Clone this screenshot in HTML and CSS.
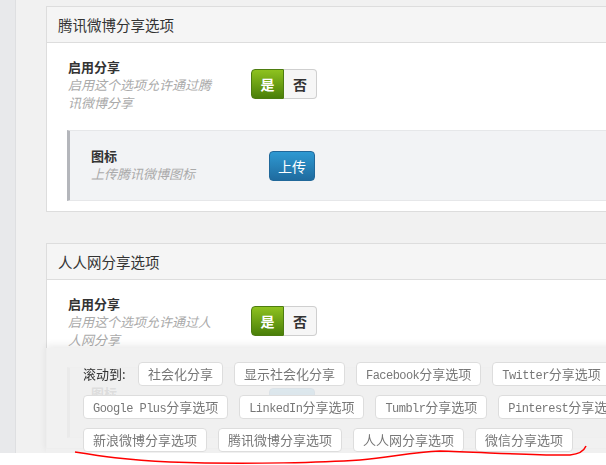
FILE: index.html
```html
<!DOCTYPE html>
<html>
<head>
  <title>分享选项</title>
  <meta charset="UTF-8" />
  <meta name="viewport" content="width=device-width, initial-scale=1.0"/>
  <link rel="stylesheet" href="styles.css">
</head>
<body>
  <div class="page">
    <div class="sidebar"></div>
    <div class="main">

      <div class="panel">
        <div class="panel-head">腾讯微博分享选项</div>
        <div class="row">
          <div class="label-col">
            <div class="label">启用分享</div>
            <div class="desc">启用这个选项允许通过腾讯微博分享</div>
          </div>
          <div class="toggle">
            <span class="on">是</span>
            <span class="off">否</span>
          </div>
        </div>
        <div class="sub">
          <div class="label-col">
            <div class="label">图标</div>
            <div class="desc">上传腾讯微博图标</div>
          </div>
          <button class="upload">上传</button>
        </div>
      </div>

      <div class="panel">
        <div class="panel-head">人人网分享选项</div>
        <div class="row">
          <div class="label-col">
            <div class="label">启用分享</div>
            <div class="desc">启用这个选项允许通过人人网分享</div>
          </div>
          <div class="toggle">
            <span class="on">是</span>
            <span class="off">否</span>
          </div>
        </div>
        <div class="sub">
          <div class="label-col">
            <div class="label">图标</div>
            <div class="desc">上传人人网图标</div>
          </div>
          <button class="upload">上传</button>
        </div>
      </div>

    </div>
  </div>

  <div class="scrollbar">
    <div class="scroll-links">
      <span class="scroll-label">滚动到:</span>
      <a class="jump">社会化分享</a>
      <a class="jump">显示社会化分享</a>
      <a class="jump"><span class="en">Facebook</span>分享选项</a>
      <a class="jump"><span class="en">Twitter</span>分享选项</a>
      <a class="jump"><span class="en">Google Plus</span>分享选项</a>
      <a class="jump"><span class="en">LinkedIn</span>分享选项</a>
      <a class="jump"><span class="en">Tumblr</span>分享选项</a>
      <a class="jump"><span class="en">Pinterest</span>分享选项</a>
      <a class="jump">新浪微博分享选项</a>
      <a class="jump">腾讯微博分享选项</a>
      <a class="jump">人人网分享选项</a>
      <a class="jump">微信分享选项</a>
    </div>
  </div>

  <div class="bottom-edge"></div>

  <svg class="mark" width="606" height="465" viewBox="0 0 606 465">
    <path d="M75 452 C100 456, 125 460, 170 462 C250 465, 330 462, 360 460 C390 458, 410 452, 440 451 C480 452, 540 456, 570 455 C580 454, 584 451, 586 446" fill="none" stroke="#f00" stroke-width="1.5"/>
  </svg>
</body>
</html>
```

FILE: styles.css
```css
html, body { margin: 0; overflow: hidden; }
body { font-family: "Noto Sans CJK SC", "Liberation Sans", sans-serif; background: #f1f1f1; color: #333; height: 465px; }

.page { display: flex; width: 760px; min-height: 465px; }
.sidebar { width: 15px; background: #e8e9eb; border-right: 1px solid #dedfe1; }
.main { flex: 1; padding: 6px 0 0 30px; }

.panel { background: #fff; border: 1px solid #ddd; border-right: none; margin-bottom: 31px; padding-bottom: 10px; }
.panel-head { background: #f5f5f5; border-bottom: 1px solid #ddd; height: 35px; line-height: 35px; padding-left: 11px; font-size: 14.5px; color: #333; }

.row { display: flex; align-items: flex-start; padding: 15px 0 18px 21px; }
.label-col { width: 150px; margin-right: 33px; }
.label { font-size: 13px; font-weight: bold; line-height: 18px; color: #333; }
.desc { font-size: 13px; font-style: italic; line-height: 18px; color: #aaa; }

.toggle { display: flex; margin-top: 11px; height: 30px; font-size: 14px; font-weight: bold; line-height: 28px; }
.toggle span { display: block; width: 31px; text-align: center; }
.toggle .on { color: #fff; background: linear-gradient(#8ec21f, #4a7f09); border: 1px solid #4d7c10; border-radius: 4px 0 0 4px; }
.toggle .off { width: 32px; color: #333; background: #f6f6f6; border: 1px solid #cfcfcf; border-left: none; border-radius: 0 4px 4px 0; }

.sub { display: flex; align-items: flex-start; margin-left: 20px; padding: 16px 0 17px 21px; background: #f2f3f5; border-left: 3px solid #b4b6bb; border-top: 1px solid #e6e7e9; border-bottom: 1px solid #e6e7e9; }
.sub .label-col { margin-right: 28px; }
.upload { margin-top: 4px; width: 46px; height: 30px; padding: 0; font-family: inherit; font-size: 14px; color: #fff; background: linear-gradient(#2e99d2, #1f6b9f); border: 1px solid #21689a; border-radius: 4px; }

.scrollbar { position: fixed; left: 46px; top: 348px; width: 654px; height: 105px; background: rgba(240, 240, 240, 0.9); box-shadow: 0 -3px 7px rgba(0, 0, 0, 0.08); }
.scroll-links { display: flex; flex-wrap: wrap; align-items: center; gap: 9px 11px; padding: 14px 0 0 37px; }
.scroll-label { font-size: 13px; color: #333; line-height: 24px; width: 44px; }
.jump { display: block; height: 22px; line-height: 22px; padding: 0 9px; font-size: 13px; color: #777; background: #fff; border: 1px solid #ddd; border-radius: 4px; white-space: nowrap; }
.jump .en { font-family: "Liberation Mono", monospace; font-size: 12px; letter-spacing: -0.55px; }

.bottom-edge { position: fixed; left: 0; right: 0; bottom: 0; height: 12px; background: #fff; }
.mark { position: fixed; left: 0; top: 0; pointer-events: none; }
```
